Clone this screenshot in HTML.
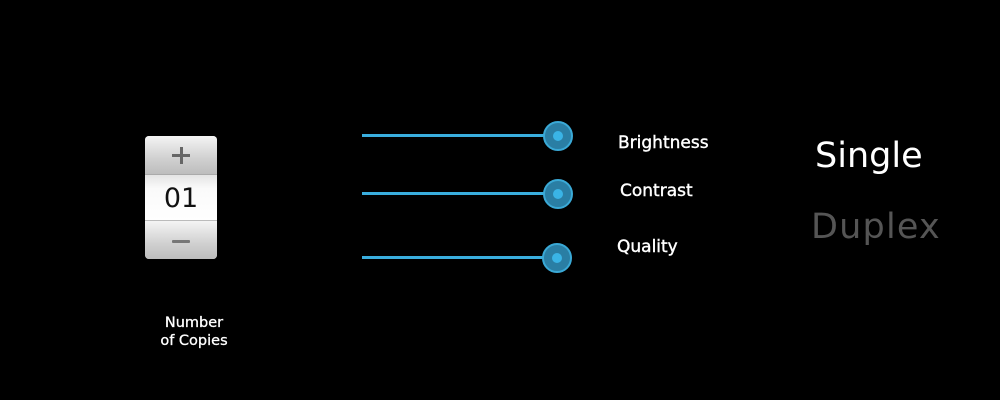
<!DOCTYPE html>
<html><head><style>
body{margin:0;width:1000px;height:400px;background:#000;position:relative;overflow:hidden;font-family:"DejaVu Sans","Liberation Sans",sans-serif;color:#fff}
.a{position:absolute;white-space:nowrap}
.stp{position:absolute;left:145px;top:136px;width:72px;height:123px;border-radius:4px;overflow:hidden;background:#ddd}
.btn{position:absolute;left:0;width:72px;background:linear-gradient(#f4f4f4,#d0d0d0 60%,#bdbdbd)}
.mid{position:absolute;left:0;top:38px;width:72px;height:47px;background:linear-gradient(#e4e4e4,#fafafa 30%,#fff);color:#111;font-size:27px;text-align:center;line-height:47px;border-top:1px solid #aaa;border-bottom:1px solid #bbb;box-sizing:border-box}
.line{position:absolute;height:3px;background:#3aaede}
.k{position:absolute;width:30px;height:30px;border-radius:50%;background:#2a7ea4;border:2px solid #3aa9d6;box-sizing:border-box}
.k::after{content:"";position:absolute;left:8px;top:8px;width:10px;height:10px;border-radius:50%;background:#3ab4e6}
.lbl{font-size:17px;font-weight:normal;-webkit-text-stroke:0.4px #fff}
</style></head><body>
<div class="stp">
<div class="btn" style="top:0;height:38px"><div style="position:absolute;left:27px;top:18px;width:18px;height:3px;background:#666"></div><div style="position:absolute;left:34.5px;top:11px;width:3px;height:17px;background:#666"></div></div>
<div class="mid">01</div>
<div class="btn" style="top:85px;height:38px"><div style="position:absolute;left:27px;top:19px;width:18px;height:3px;background:#777;border-radius:1px"></div></div>
</div>
<div class="a" style="left:155px;top:314px;width:78px;text-align:center;font-size:14.5px;line-height:18px;-webkit-text-stroke:0.3px #fff">Number<br>of Copies</div>
<div class="line" style="left:362px;top:134px;width:190px"></div>
<div class="k" style="left:543px;top:121px"></div>
<div class="line" style="left:362px;top:192px;width:190px"></div>
<div class="k" style="left:543px;top:179px"></div>
<div class="line" style="left:362px;top:256px;width:190px"></div>
<div class="k" style="left:542px;top:243px"></div>
<div class="a lbl" style="left:618px;top:133px">Brightness</div>
<div class="a lbl" style="left:620px;top:181px">Contrast</div>
<div class="a lbl" style="left:617px;top:237px">Quality</div>
<div class="a" style="left:815px;top:136px;font-size:35px">Single</div>
<div class="a" style="left:811px;top:207px;font-size:35px;letter-spacing:1.2px;color:#555">Duplex</div>
</body></html>
